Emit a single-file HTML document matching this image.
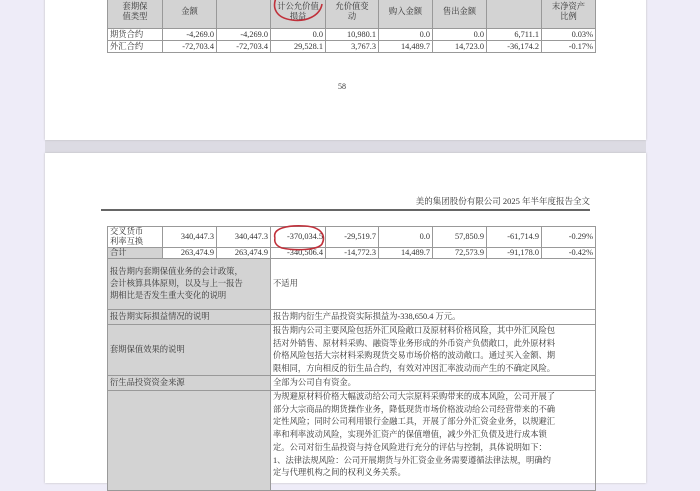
<!DOCTYPE html>
<html><head><meta charset="utf-8"><style>
*{margin:0;padding:0;box-sizing:border-box}
body{width:700px;height:470px;overflow:hidden;background:#eeecf8;position:relative;font-family:"Liberation Serif","Noto Serif CJK SC",serif;color:#333}
.page{position:absolute;left:45px;width:601px;background:#fff;box-shadow:0 0 2px #bbb}
.a{position:absolute;font-size:8px;line-height:10px;white-space:nowrap}
table{border-collapse:collapse;position:absolute;font-size:8.3px;table-layout:fixed}
td{border:1px solid #999;padding:0 2px;text-align:right;line-height:10px;overflow:hidden;white-space:nowrap}
td.l{text-align:left}
.g{background:#d3d3d3}
</style></head><body>
<div style="position:absolute;left:45px;top:140px;width:601px;height:13px;background:#dcdbe3"></div>
<div class="page" style="top:-5px;height:145px">
 <table style="left:62px;top:0;width:488px">
  <tr class="g" style="height:33px"><td class="l" style="width:55px;text-align:center">套期保<br>值类型</td><td style="width:54px;text-align:center">金额</td><td style="width:54px">&nbsp;</td><td style="width:55px;text-align:center">计公允价值<br>损益</td><td style="width:53px;text-align:center">允价值变<br>动</td><td style="width:54px;text-align:center">购入金额</td><td style="width:54px;text-align:center">售出金额</td><td style="width:55px"></td><td style="width:54px;text-align:center">末净资产<br>比例</td></tr>
  <tr style="height:12px"><td class="l">期货合约</td><td>-4,269.0</td><td>-4,269.0</td><td>0.0</td><td>10,980.1</td><td>0.0</td><td>0.0</td><td>6,711.1</td><td>0.03%</td></tr>
  <tr style="height:12px"><td class="l">外汇合约</td><td>-72,703.4</td><td>-72,703.4</td><td>29,528.1</td><td>3,767.3</td><td>14,489.7</td><td>14,723.0</td><td>-36,174.2</td><td>-0.17%</td></tr>
 </table>
 <div class="a" style="left:293px;top:87px">58</div>
</div>
<div class="page" style="top:153px;height:330px">
 <div class="a" style="right:56px;top:43px;font-size:8.5px">美的集团股份有限公司 2025 年半年度报告全文</div>
 <div style="position:absolute;left:56px;top:56px;width:489px;height:2px;background:#666"></div>
 <table style="left:62px;top:73px;width:488px">
  <tr style="height:21px"><td class="l" style="width:55px">交叉货币<br>利率互换</td><td style="width:54px">340,447.3</td><td style="width:54px">340,447.3</td><td style="width:55px">-370,034.5</td><td style="width:53px">-29,519.7</td><td style="width:54px">0.0</td><td style="width:54px">57,850.9</td><td style="width:55px">-61,714.9</td><td style="width:54px">-0.29%</td></tr>
  <tr style="height:10px"><td class="l g">合计</td><td>263,474.9</td><td>263,474.9</td><td>-340,506.4</td><td>-14,772.3</td><td>14,489.7</td><td>72,573.9</td><td>-91,178.0</td><td>-0.42%</td></tr>
  <tr style="height:51px"><td class="l g" colspan="3" style="line-height:12px">报告期内套期保值业务的会计政策，<br>会计核算具体原则，以及与上一报告<br>期相比是否发生重大变化的说明</td><td class="l" colspan="6">不适用</td></tr>
  <tr style="height:15px"><td class="l g" colspan="3">报告期实际损益情况的说明</td><td class="l" colspan="6">报告期内衍生产品投资实际损益为-338,650.4 万元。</td></tr>
  <tr style="height:50px"><td class="l g" colspan="3">套期保值效果的说明</td><td class="l" colspan="6" style="line-height:12.5px">报告期内公司主要风险包括外汇风险敞口及原材料价格风险，其中外汇风险包<br>括对外销售、原材料采购、融资等业务形成的外币资产负债敞口，此外原材料<br>价格风险包括大宗材料采购现货交易市场价格的波动敞口。通过买入金额、期<br>限相同，方向相反的衍生品合约，有效对冲因汇率波动而产生的不确定风险。</td></tr>
  <tr style="height:15px"><td class="l g" colspan="3">衍生品投资资金来源</td><td class="l" colspan="6">全部为公司自有资金。</td></tr>
  <tr style="height:100px;vertical-align:top"><td class="l g" colspan="3"></td><td class="l" colspan="6" style="line-height:12.7px">为规避原材料价格大幅波动给公司大宗原料采购带来的成本风险，公司开展了<br>部分大宗商品的期货操作业务，降低现货市场价格波动给公司经营带来的不确<br>定性风险；同时公司利用银行金融工具，开展了部分外汇资金业务，以规避汇<br>率和利率波动风险，实现外汇资产的保值增值，减少外汇负债及进行成本锁<br>定。公司对衍生品投资与持仓风险进行充分的评估与控制，具体说明如下：<br>1、法律法规风险：公司开展期货与外汇资金业务需要遵循法律法规，明确约<br>定与代理机构之间的权利义务关系。</td></tr>
 </table>
</div>
<svg style="position:absolute;left:0;top:0" width="700" height="470">
 <path d="M276 -2 C272 8 276 18 292 20 C306 22 320 16 322 4" fill="none" stroke="#c0303a" stroke-width="1.6"/>
 <path d="M275 238 C272 228 288 225 305 226 C322 227 326 236 322 244 C318 250 296 251 282 248 C276 246 274 242 275 238" fill="none" stroke="#c0303a" stroke-width="1.6"/>
</svg>
</body></html>
